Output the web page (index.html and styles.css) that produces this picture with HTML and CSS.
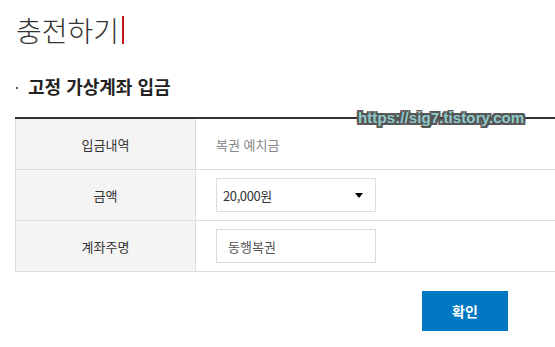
FILE: index.html
```html
<!DOCTYPE html>
<html lang="ko">
<head>
    <meta charset="UTF-8">
    <title>충전하기</title>
    <link rel="stylesheet" href="styles.css">
</head>
<body>

    <div class="page">
        <h1 class="page-title">충전하기</h1>

        <h2 class="section-title">고정 가상계좌 입금</h2>

        <div class="watermark">https://sig7.tistory.com</div>

        <table class="charge-table">
            <tr>
                <th>입금내역</th>
                <td class="plain">복권 예치금</td>
            </tr>
            <tr>
                <th>금액</th>
                <td>
                    <div class="select-box">
                        <span>20,000원</span>
                        <svg class="arrow" width="8" height="5" viewBox="0 0 8 5"><path d="M0 0H8L4 5Z" fill="#000"/></svg>
                    </div>
                </td>
            </tr>
            <tr>
                <th>계좌주명</th>
                <td>
                    <div class="text-box">동행복권</div>
                </td>
            </tr>
        </table>

        <div class="actions">
            <button type="button" class="btn-confirm">확인</button>
        </div>
    </div>

</body>
</html>
```

FILE: styles.css
```css
body {
    margin: 0;
    padding: 0;
    background-color: #fff;
    font-family: "Noto Sans CJK KR", "Noto Sans", sans-serif;
    color: #333;
}
.page {
    position: relative;
    padding: 0 0 0 15px;
}
.page-title {
    display: inline-flex;
    align-items: center;
    margin: 11px 0 0 1px;
    font-size: 28px;
    font-weight: 300;
    line-height: 38px;
    color: #333;
}
.page-title::after {
    content: "";
    display: inline-block;
    width: 2px;
    height: 28px;
    margin-left: 3px;
    background-color: #c4161c;
}
.section-title {
    position: relative;
    margin: 25px 0 19px 13px;
    font-size: 18px;
    font-weight: 700;
    line-height: 24px;
    color: #222;
}
.section-title::before {
    content: "";
    position: absolute;
    left: -12px;
    top: 13px;
    width: 2px;
    height: 2px;
    background-color: #555;
}
.watermark {
    position: absolute;
    left: 358px;
    top: 109px;
    font-family: "Liberation Sans", sans-serif;
    font-size: 15px;
    font-weight: 700;
    line-height: 18px;
    color: #8fcaca;
    letter-spacing: 0.1px;
    text-shadow: -2px 0 0 #555, 2px 0 0 #555, 0 -2px 0 #555, 0 2px 0 #555,
        -2px -2px 0 #555, 2px 2px 0 #555, -2px 2px 0 #555, 2px -2px 0 #555;
    z-index: 2;
}
.charge-table {
    width: 540px;
    border-collapse: collapse;
    border-top: 2px solid #333;
}
.charge-table th,
.charge-table td {
    height: 50px;
    padding: 0;
    border-bottom: 1px solid #ddd;
    font-size: 13px;
}
.charge-table th {
    width: 179px;
    background-color: #f4f4f4;
    border-left: 1px solid #ddd;
    border-right: 1px solid #ddd;
    font-weight: 400;
    color: #333;
    text-align: center;
}
.charge-table td {
    padding-left: 20px;
    text-align: left;
}
.charge-table td.plain {
    color: #888;
}
.select-box,
.text-box {
    display: flex;
    align-items: center;
    box-sizing: border-box;
    width: 160px;
    height: 34px;
    border: 1px solid #ddd;
    background-color: #fff;
    font-size: 13px;
}
.select-box {
    justify-content: space-between;
    padding: 0 12px 0 6px;
    color: #333;
    letter-spacing: -0.4px;
}
.text-box {
    padding: 0 11px;
    color: #555;
}
.actions {
    display: flex;
    justify-content: flex-end;
    padding: 19px 47px 0 0;
}
.btn-confirm {
    width: 86px;
    height: 40px;
    border: 0;
    background-color: #0079c2;
    color: #fff;
    font-family: inherit;
    font-size: 14px;
    font-weight: 700;
    cursor: pointer;
}
```
